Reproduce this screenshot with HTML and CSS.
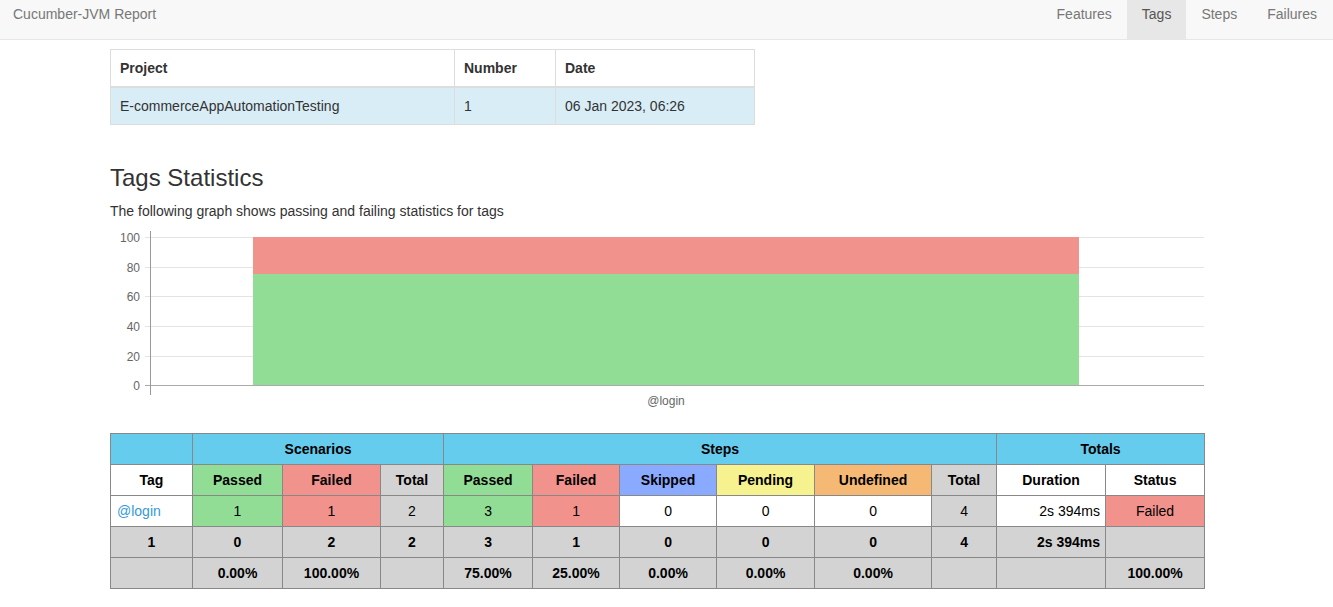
FILE: index.html
```html
<!DOCTYPE html>
<html>
<head>
<meta charset="utf-8">
<title>Cucumber-JVM Report</title>
<link rel="stylesheet" href="styles.css">
</head>
<body>
<nav class="navbar">
  <div class="brand">Cucumber-JVM Report</div>
  <ul class="nav">
    <li><a href="#">Features</a></li>
    <li class="active"><a href="#">Tags</a></li>
    <li><a href="#">Steps</a></li>
    <li><a href="#">Failures</a></li>
  </ul>
</nav>
<main class="container">
  <table class="info-table">
    <colgroup><col class="c-project"><col class="c-number"><col class="c-date"></colgroup>
    <thead>
      <tr><th>Project</th><th>Number</th><th>Date</th></tr>
    </thead>
    <tbody>
      <tr class="info"><td>E-commerceAppAutomationTesting</td><td>1</td><td>06 Jan 2023, 06:26</td></tr>
    </tbody>
  </table>

  <h2 class="title">Tags Statistics</h2>
  <p class="subtitle">The following graph shows passing and failing statistics for tags</p>

  <svg class="chart" width="1094" height="186" viewBox="0 0 1094 186">
    <g class="grid">
      <line x1="35" y1="11.5" x2="1094" y2="11.5"/>
      <line x1="35" y1="41.5" x2="1094" y2="41.5"/>
      <line x1="35" y1="70.5" x2="1094" y2="70.5"/>
      <line x1="35" y1="100.5" x2="1094" y2="100.5"/>
      <line x1="35" y1="130.5" x2="1094" y2="130.5"/>
    </g>
    <rect x="143" y="11" width="826" height="37" fill="#F2928C"/>
    <rect x="143" y="48" width="826" height="111" fill="#92DD96"/>
    <line class="xaxis" x1="35" y1="159.5" x2="1094" y2="159.5"/>
    <line class="yaxis" x1="40.5" y1="5" x2="40.5" y2="169"/>
    <g class="ylabels">
      <text x="30" y="15.5">100</text>
      <text x="30" y="45.5">80</text>
      <text x="30" y="74.5">60</text>
      <text x="30" y="104.5">40</text>
      <text x="30" y="134.5">20</text>
      <text x="30" y="163.5">0</text>
    </g>
    <text class="xlabel" x="556" y="179">@login</text>
  </svg>

  <table class="stats">
    <colgroup>
      <col style="width:82px"><col style="width:90px"><col style="width:98px"><col style="width:63px">
      <col style="width:89px"><col style="width:87px"><col style="width:97px"><col style="width:98px">
      <col style="width:117px"><col style="width:65px"><col style="width:109px"><col style="width:99px">
    </colgroup>
    <thead>
      <tr class="group">
        <th></th>
        <th colspan="3">Scenarios</th>
        <th colspan="6">Steps</th>
        <th colspan="2">Totals</th>
      </tr>
      <tr>
        <th class="white">Tag</th>
        <th class="passed">Passed</th>
        <th class="failed">Failed</th>
        <th class="total">Total</th>
        <th class="passed">Passed</th>
        <th class="failed">Failed</th>
        <th class="skipped">Skipped</th>
        <th class="pending">Pending</th>
        <th class="undefined">Undefined</th>
        <th class="total">Total</th>
        <th class="white">Duration</th>
        <th class="white">Status</th>
      </tr>
    </thead>
    <tbody>
      <tr>
        <td class="tagname"><a href="#">@login</a></td>
        <td class="passed">1</td>
        <td class="failed">1</td>
        <td class="total">2</td>
        <td class="passed">3</td>
        <td class="failed">1</td>
        <td>0</td>
        <td>0</td>
        <td>0</td>
        <td class="total">4</td>
        <td class="duration">2s 394ms</td>
        <td class="failed">Failed</td>
      </tr>
    </tbody>
    <tfoot>
      <tr class="sum">
        <td>1</td><td>0</td><td>2</td><td>2</td><td>3</td><td>1</td><td>0</td><td>0</td><td>0</td><td>4</td>
        <td class="duration">2s 394ms</td><td></td>
      </tr>
      <tr class="sum">
        <td></td><td>0.00%</td><td>100.00%</td><td></td><td>75.00%</td><td>25.00%</td><td>0.00%</td><td>0.00%</td><td>0.00%</td><td></td><td></td><td>100.00%</td>
      </tr>
    </tfoot>
  </table>
</main>
</body>
</html>
```

FILE: styles.css
```css
* { box-sizing: border-box; }

body {
  margin: 0;
  font-family: "Liberation Sans", Arial, sans-serif;
  font-size: 14px;
  line-height: 20px;
  color: #333;
  background: #fff;
}

.navbar {
  display: flex;
  justify-content: space-between;
  height: 40px;
  background: #f8f8f8;
  border-bottom: 1px solid #e7e7e7;
}

.brand {
  padding: 4px 13px 0;
  color: #777;
  font-size: 14px;
}

.nav {
  display: flex;
  margin: 0;
  padding: 0 1px 0 0;
  list-style: none;
}

.nav a {
  display: block;
  height: 39px;
  padding: 4px 15px 0;
  color: #777;
  text-decoration: none;
}

.nav .active a {
  background: #e7e7e7;
  color: #555;
}

.container {
  width: 1094px;
  margin-left: 110px;
  padding-top: 9px;
  padding-bottom: 20px;
}

.info-table {
  width: 644px;
  border-collapse: collapse;
  table-layout: fixed;
}

.c-project { width: 344px; }
.c-number { width: 101px; }
.c-date { width: 199px; }

.info-table th,
.info-table td {
  border: 1px solid #ddd;
  padding: 8px 9px;
  text-align: left;
  line-height: 20px;
}

.info-table th {
  font-weight: bold;
  border-bottom: 2px solid #ddd;
  height: 37px;
}

.info-table td {
  height: 35px;
}

.info-table .info td {
  background: #d9edf7;
}

.title {
  margin: 39px 0 0;
  font-size: 24px;
  font-weight: normal;
  line-height: 28px;
  color: #333;
}

.subtitle {
  margin: 9px 0 0;
  line-height: 20px;
}

.chart {
  display: block;
  margin-top: 5px;
}

.chart .grid line {
  stroke: #e4e4e4;
  stroke-width: 1;
}

.chart .xaxis {
  stroke: #aaa;
  stroke-width: 1;
}

.chart .yaxis {
  stroke: #999;
  stroke-width: 1;
}

.chart text {
  font-family: "Liberation Sans", Arial, sans-serif;
  font-size: 12px;
  fill: #666;
}

.chart .ylabels text { text-anchor: end; }
.chart .xlabel { text-anchor: middle; }

.stats {
  width: 1094px;
  margin-top: 21px;
  border-collapse: collapse;
  table-layout: fixed;
  color: #000;
}

.stats th,
.stats td {
  border: 1px solid #888;
  height: 31px;
  padding: 0 5px;
  text-align: center;
  vertical-align: middle;
  line-height: 20px;
}

.stats th { font-weight: bold; }

.stats .group th { background: #66CCEE; }

.stats .white { background: #fff; }
.stats .passed { background: #92DD96; }
.stats .failed { background: #F2928C; }
.stats .skipped { background: #8AAAFF; }
.stats .pending { background: #F5F28F; }
.stats .undefined { background: #F5B975; }
.stats .total { background: #d3d3d3; }

.stats .tagname { text-align: left; padding-left: 6px; }
.stats .tagname a { color: #3399dd; text-decoration: none; }
.stats .duration { text-align: right; }

.stats .sum td {
  background: #d3d3d3;
  font-weight: bold;
}
```
